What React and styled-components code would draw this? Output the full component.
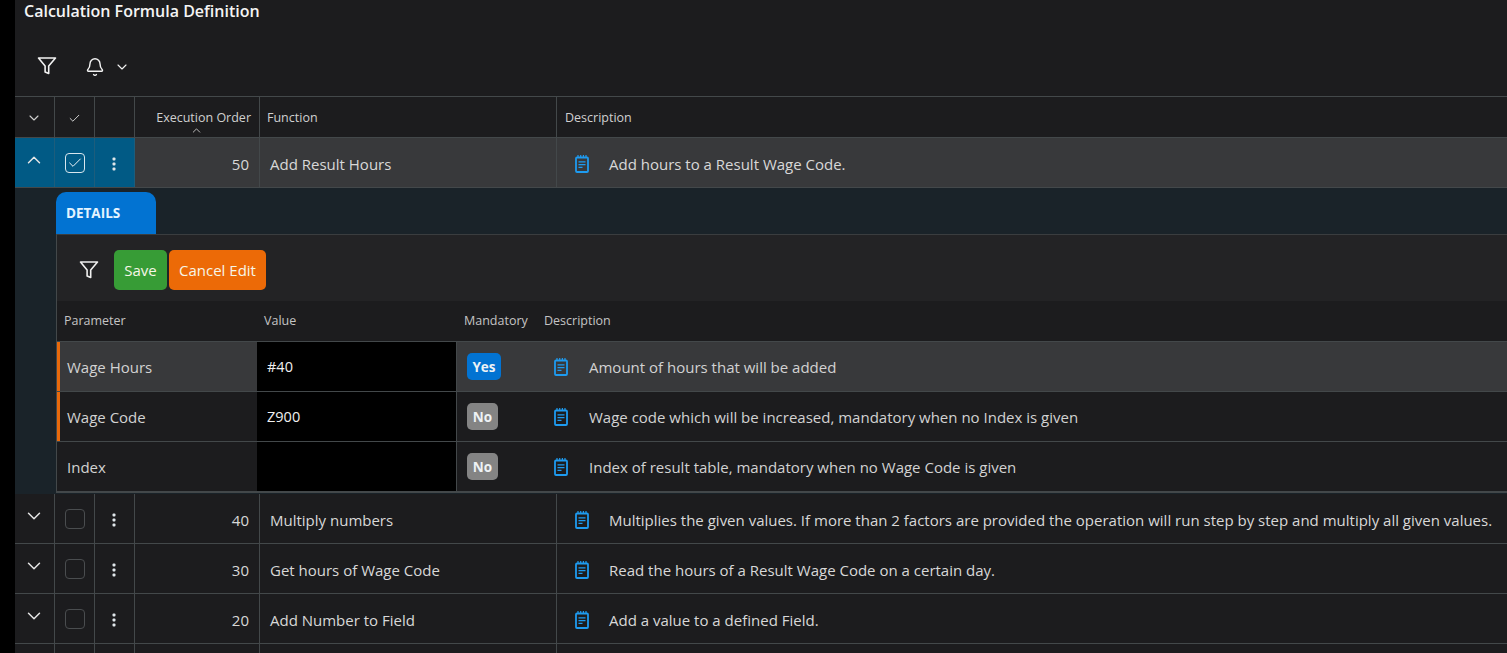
import React from 'react';
import styled, { createGlobalStyle } from 'styled-components';
import { ChevronDown, ChevronUp, Check, Bell } from 'lucide-react';

const GlobalStyle = createGlobalStyle`
  html, body {
    margin: 0;
    height: 100%;
    overflow: hidden;
    background: #000;
    font-family: "Open Sans", "Noto Sans", sans-serif;
    color: #d6d6d6;
  }
  * {
    box-sizing: border-box;
  }
`;

const Page = styled.div`
  margin-left: 15px;
  height: 653px;
  overflow: hidden;
  background: #1c1c1e;
`;

const Title = styled.h1`
  margin: 0;
  padding: 0 0 0 9px;
  height: 40px;
  line-height: 22px;
  font-size: 16px;
  font-weight: 600;
  color: #f4f4f4;
`;

const Toolbar = styled.div`
  display: flex;
  align-items: center;
  height: 56px;
  padding: 0 0 4px 22px;
  color: #f2f2f2;
`;

const BellButton = styled.span`
  display: flex;
  align-items: center;
  gap: 9px;
  margin: 2px 0 0 28px;
  color: #f2f2f2;
`;

const MainRow = styled.div`
  display: grid;
  grid-template-columns: 40px 40px 40px 125px 297px 1fr;
  height: ${(p) => p.$height || 50}px;
  border-bottom: 1px solid #43484a;
  background: ${(p) => (p.$open ? '#38393b' : 'transparent')};
`;

const HeadRow = styled(MainRow)`
  height: 42px;
  border-top: 1px solid #43484a;
`;

const Cell = styled.div`
  position: relative;
  display: flex;
  align-items: center;
  justify-content: ${(p) => p.$justify || 'flex-start'};
  padding: ${(p) => p.$pad || '2px 0 0'};
  border-right: 1px solid ${(p) => (p.$open ? '#1d5d7c' : '#43484a')};
  background: ${(p) => (p.$open ? '#015a85' : 'transparent')};
  font-size: 15px;
  color: #d8d8d8;
  white-space: nowrap;
  &:last-child {
    border-right: 0;
  }
`;

const HeadCell = styled(Cell)`
  font-size: 12.5px;
  color: #d0d0d0;
`;

const OrderLabel = styled.span`
  display: block;
  margin-top: -2px;
`;

const SortCaret = styled(ChevronUp)`
  position: absolute;
  right: 56px;
  bottom: 0;
`;

const RowCaret = styled.span`
  display: flex;
  margin-top: -7px;
  color: #e6e6e6;
`;

const CheckBox = styled.span`
  display: flex;
  align-items: center;
  justify-content: center;
  width: 20px;
  height: 20px;
  margin-top: -1px;
  border: 1px solid ${(p) => (p.$checked ? '#d8e6ee' : '#4a4d4f')};
  border-radius: 4px;
  color: #eef4f8;
`;

const DescText = styled.span`
  margin-left: ${(p) => p.$gap || 20}px;
`;

const Details = styled.section`
  display: grid;
  grid-template-columns: 41px 1fr;
  height: 306px;
  background: #1a2329;
`;

const Gutter = styled.div`
  background: #1a2329;
`;

const DetailBody = styled.div`
  padding-top: 4px;
  min-width: 0;
`;

const Tab = styled.div`
  display: flex;
  align-items: center;
  width: 100px;
  height: 42px;
  padding-left: 10px;
  border-radius: 10px 10px 0 0;
  background: #0273d2;
  font-size: 13.5px;
  font-weight: 700;
  color: #e4f4ff;
`;

const DetailPanel = styled.div`
  border-left: 1px solid #43484a;
  border-bottom: 1px solid #43484a;
  background: #1c1c1e;
`;

const DetailToolbar = styled.div`
  display: flex;
  align-items: center;
  height: 67px;
  padding: 4px 0 0 22px;
  border-top: 1px solid #3a3d3f;
  background: #232325;
  color: #f0f0f0;
`;

const ActionButton = styled.button`
  width: ${(p) => p.$width}px;
  height: 40px;
  margin-left: ${(p) => p.$left || 0}px;
  padding: 0;
  border: 0;
  border-radius: 5px;
  background: ${(p) => p.$bg};
  color: #f6f6e8;
  font-family: inherit;
  font-size: 15px;
`;

const ParamRow = styled.div`
  display: grid;
  grid-template-columns: 200px 200px 80px 1fr;
  height: ${(p) => p.$height || 50}px;
  border-bottom: 1px solid #43484a;
  background: ${(p) => (p.$active ? '#38393b' : 'transparent')};
`;

const ParamName = styled.div`
  display: flex;
  align-items: center;
  padding-left: 7px;
  border-left: 3px solid ${(p) => (p.$required ? '#e8690b' : 'transparent')};
  font-size: 15px;
  color: #d2d2d2;
`;

const ParamValue = styled.div`
  display: flex;
  align-items: center;
  padding: 0 0 1px 10px;
  border-right: 1px solid #43484a;
  background: #000;
  font-size: 14.5px;
  color: #f0f0f0;
`;

const ParamFlag = styled.div`
  display: flex;
  align-items: center;
  padding-left: 10px;
`;

const FlagBadge = styled.span`
  display: flex;
  align-items: center;
  justify-content: center;
  width: ${(p) => (p.$on ? 34 : 31)}px;
  height: 27px;
  border-radius: 5px;
  background: ${(p) => (p.$on ? '#0273d2' : '#848484')};
  font-size: 13.5px;
  font-weight: 700;
  color: #eef2f5;
`;

const ParamDesc = styled.div`
  display: flex;
  align-items: center;
  padding-left: 17px;
  font-size: 15px;
  color: #d2d2d2;
  white-space: nowrap;
`;

const ParamHead = styled.div`
  display: flex;
  align-items: center;
  padding: 0 0 2px ${(p) => p.$pad || 7}px;
  font-size: 12.5px;
  color: #c4c4c4;
`;

const FilterIcon = ({ size = 20 }) => (
  <svg width={size} height={size} viewBox="0 0 20 20" fill="none" stroke="currentColor" strokeWidth="1.6" strokeLinejoin="round">
    <path d="M1.5 2h17l-6.8 8v7.5l-3.6-1.6V10z" />
  </svg>
);

const NoteIcon = () => (
  <svg width="14" height="18" viewBox="0 0 14 18" fill="none" stroke="#1e9bf0" strokeWidth="1.8">
    <rect x="1" y="2.5" width="12" height="14.5" rx="1" />
    <path d="M3 0v3M5.7 0v3M8.4 0v3M11 0v3" strokeWidth="1.2" />
    <path d="M3.5 6.8h7M3.5 9.6h7M3.5 12.4h4" strokeWidth="1.3" />
  </svg>
);

const KebabIcon = () => (
  <svg width="4" height="14" viewBox="0 0 4 14" fill="#dfe6ea">
    <rect x="0.5" y="0.5" width="3" height="3" rx="1" />
    <rect x="0.5" y="5.5" width="3" height="3" rx="1" />
    <rect x="0.5" y="10.5" width="3" height="3" rx="1" />
  </svg>
);

const params = [
  { name: 'Wage Hours', value: '#40', on: true, required: true, desc: 'Amount of hours that will be added' },
  { name: 'Wage Code', value: 'Z900', on: false, required: true, desc: 'Wage code which will be increased, mandatory when no Index is given' },
  { name: 'Index', value: '', on: false, required: false, desc: 'Index of result table, mandatory when no Wage Code is given' },
];

const rows = [
  { order: 40, fn: 'Multiply numbers', desc: 'Multiplies the given values. If more than 2 factors are provided the operation will run step by step and multiply all given values.' },
  { order: 30, fn: 'Get hours of Wage Code', desc: 'Read the hours of a Result Wage Code on a certain day.' },
  { order: 20, fn: 'Add Number to Field', desc: 'Add a value to a defined Field.' },
];

const DataRow = ({ row }) => (
  <MainRow>
    <Cell $justify="center" $pad="2px 2px 0 0"><RowCaret><ChevronDown size={22} strokeWidth={1.6} /></RowCaret></Cell>
    <Cell $justify="center"><CheckBox /></Cell>
    <Cell $justify="center" $pad="2px 2px 0 0"><KebabIcon /></Cell>
    <Cell $justify="flex-end" $pad="2px 10px 0 0">{row.order}</Cell>
    <Cell $pad="2px 0 0 10px">{row.fn}</Cell>
    <Cell $pad="2px 0 0 18px"><NoteIcon /><DescText>{row.desc}</DescText></Cell>
  </MainRow>
);

const EmptyRow = () => (
  <MainRow>
    <Cell /><Cell /><Cell /><Cell /><Cell /><Cell />
  </MainRow>
);

export default function App() {
  return (
    <Page>
      <GlobalStyle />
      <Title>Calculation Formula Definition</Title>
      <Toolbar>
        <FilterIcon />
        <BellButton>
          <Bell size={20} strokeWidth={1.7} />
          <ChevronDown size={16} strokeWidth={1.7} />
        </BellButton>
      </Toolbar>

      <HeadRow>
        <HeadCell $justify="center" $pad="2px 2px 0 0"><ChevronDown size={16} strokeWidth={1.6} /></HeadCell>
        <HeadCell $justify="center"><Check size={13} strokeWidth={1.8} /></HeadCell>
        <HeadCell />
        <HeadCell $justify="flex-end" $pad="2px 8px 0 0">
          <OrderLabel>Execution Order</OrderLabel>
          <SortCaret size={13} strokeWidth={1.6} />
        </HeadCell>
        <HeadCell $pad="0 0 0 7px">Function</HeadCell>
        <HeadCell $pad="0 0 0 8px">Description</HeadCell>
      </HeadRow>

      <MainRow $open>
        <Cell $open $justify="center" $pad="2px 2px 0 0"><RowCaret><ChevronUp size={22} strokeWidth={1.6} /></RowCaret></Cell>
        <Cell $open $justify="center"><CheckBox $checked><Check size={16} strokeWidth={1.5} /></CheckBox></Cell>
        <Cell $open $justify="center" $pad="2px 2px 0 0"><KebabIcon /></Cell>
        <Cell $justify="flex-end" $pad="2px 10px 0 0">50</Cell>
        <Cell $pad="2px 0 0 10px">Add Result Hours</Cell>
        <Cell $pad="2px 0 0 18px"><NoteIcon /><DescText>Add hours to a Result Wage Code.</DescText></Cell>
      </MainRow>

      <Details>
        <Gutter />
        <DetailBody>
          <Tab>DETAILS</Tab>
          <DetailPanel>
            <DetailToolbar>
              <FilterIcon size={20} />
              <ActionButton $bg="#379c36" $left={15} $width={53}>Save</ActionButton>
              <ActionButton $bg="#ec6a07" $left={2} $width={97}>Cancel Edit</ActionButton>
            </DetailToolbar>
            <ParamRow $height={41}>
              <ParamHead>Parameter</ParamHead>
              <ParamHead>Value</ParamHead>
              <ParamHead>Mandatory</ParamHead>
              <ParamHead>Description</ParamHead>
            </ParamRow>
            {params.map((p, i) => (
              <ParamRow key={p.name} $active={i === 0}>
                <ParamName $required={p.required}>{p.name}</ParamName>
                <ParamValue>{p.value}</ParamValue>
                <ParamFlag><FlagBadge $on={p.on}>{p.on ? 'Yes' : 'No'}</FlagBadge></ParamFlag>
                <ParamDesc><NoteIcon /><DescText $gap={21}>{p.desc}</DescText></ParamDesc>
              </ParamRow>
            ))}
          </DetailPanel>
        </DetailBody>
      </Details>

      {rows.map((row) => <DataRow key={row.order} row={row} />)}
      <EmptyRow />
    </Page>
  );
}
